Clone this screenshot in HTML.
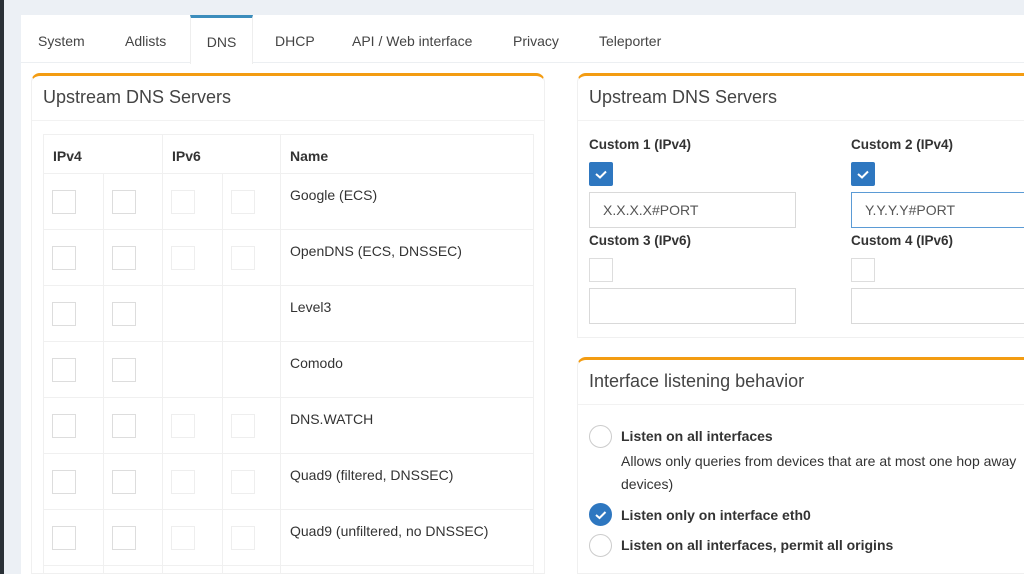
<!DOCTYPE html>
<html><head><style>
*{box-sizing:border-box;margin:0;padding:0}
html{width:1024px;height:574px;overflow:hidden}
body{width:1024px;height:574px;overflow:hidden;background:#ecf0f5;font-family:"Liberation Sans",sans-serif;color:#333;position:relative}
.strip{position:absolute;left:0;top:0;width:4px;height:574px;background:#2a3036}
.wrap{position:absolute;left:21px;top:15px;width:1003px;height:559px;background:#fff}
.tabs{position:absolute;left:0;top:0;right:0;height:48px;border-bottom:1px solid #eceff2}
.tab{position:absolute;top:0;height:48px;line-height:53px;font-size:14px;color:#444}
.tab.act{background:#fff;border-top:3px solid #3c8dbc;line-height:49px;border-left:1px solid #eee;border-right:1px solid #eee;text-align:center;height:49px}
.box{position:absolute;background:#fff;border:1px solid #f0f0f0;border-top:3px solid #f39c12;border-radius:9px 9px 0 0;overflow:hidden}
.box.r{border-right:none;border-top-right-radius:0}
.bh{height:45px;border-bottom:1px solid #f2f2f2;font-size:18px;color:#444;padding:11px 0 0 11px}
table{position:absolute;border-collapse:collapse}
td,th{border:1px solid #f0f0f0;vertical-align:top;text-align:left;font-size:14px}
th{height:39px;padding:13px 0 0 9px;font-weight:bold;color:#333}
td{height:56px}
.cb{display:inline-block;width:24px;height:24px;border:1px solid #ddd;margin:16px 0 0 8px}
.cb.l{border-color:#eee}
td.n{padding:13px 0 0 9px;color:#333}
.lbl{position:absolute;font-size:13.5px;font-weight:bold;color:#333}
.ck{position:absolute;width:24px;height:24px;background:#2e77c0;border-radius:2px}
.ek{position:absolute;width:24px;height:24px;border:1px solid #ddd}
.inp{position:absolute;width:207px;height:36px;border:1px solid #d9d9d9;font-size:14px;color:#555;padding:9px 0 0 13px}
.rad{position:absolute;width:23px;height:23px;border:1px solid #ccc;border-radius:50%}
.rt{position:absolute;font-size:14px}
</style></head><body>
<div class="strip"></div>
<div class="wrap">
 <div class="tabs">
  <div class="tab" style="left:17px">System</div>
  <div class="tab" style="left:104px">Adlists</div>
  <div class="tab act" style="left:169px;width:63px">DNS</div>
  <div class="tab" style="left:254px">DHCP</div>
  <div class="tab" style="left:331px">API / Web interface</div>
  <div class="tab" style="left:492px">Privacy</div>
  <div class="tab" style="left:578px">Teleporter</div>
 </div>
</div>
<div class="box" style="left:31px;top:73px;width:514px;height:501px">
 <div class="bh">Upstream DNS Servers</div>
 <table style="left:11px;top:58px;width:491px">
  <tr><th colspan="2" style="width:119px">IPv4</th><th colspan="2" style="width:118px">IPv6</th><th>Name</th></tr>
  <tr><td style="width:60px"><span class="cb"></span></td><td style="width:59px"><span class="cb"></span></td><td style="width:60px"><span class="cb l"></span></td><td style="width:58px"><span class="cb l"></span></td><td class="n">Google (ECS)</td></tr>
  <tr><td><span class="cb"></span></td><td><span class="cb"></span></td><td><span class="cb l"></span></td><td><span class="cb l"></span></td><td class="n">OpenDNS (ECS, DNSSEC)</td></tr>
  <tr><td><span class="cb"></span></td><td><span class="cb"></span></td><td></td><td></td><td class="n">Level3</td></tr>
  <tr><td><span class="cb"></span></td><td><span class="cb"></span></td><td></td><td></td><td class="n">Comodo</td></tr>
  <tr><td><span class="cb"></span></td><td><span class="cb"></span></td><td><span class="cb l"></span></td><td><span class="cb l"></span></td><td class="n">DNS.WATCH</td></tr>
  <tr><td><span class="cb"></span></td><td><span class="cb"></span></td><td><span class="cb l"></span></td><td><span class="cb l"></span></td><td class="n">Quad9 (filtered, DNSSEC)</td></tr>
  <tr><td><span class="cb"></span></td><td><span class="cb"></span></td><td><span class="cb l"></span></td><td><span class="cb l"></span></td><td class="n">Quad9 (unfiltered, no DNSSEC)</td></tr>
  <tr><td style="height:9px"></td><td style="height:9px"></td><td style="height:9px"></td><td style="height:9px"></td><td style="height:9px"></td></tr>
 </table>
</div>
<div class="box r" style="left:577px;top:73px;width:447px;height:265px">
 <div class="bh">Upstream DNS Servers</div>
</div>
<div class="lbl" style="left:589px;top:137px">Custom 1 (IPv4)</div>
<div class="lbl" style="left:851px;top:137px">Custom 2 (IPv4)</div>
<div class="ck" style="left:589px;top:162px"><svg width="24" height="24"><path d="M7 12l4 3.5 6-6" stroke="#fff" stroke-width="2" fill="none"/></svg></div>
<div class="ck" style="left:851px;top:162px"><svg width="24" height="24"><path d="M7 12l4 3.5 6-6" stroke="#fff" stroke-width="2" fill="none"/></svg></div>
<div class="inp" style="left:589px;top:192px">X.X.X.X#PORT</div>
<div class="inp" style="left:851px;top:192px;border-color:#5b9bd5;border-right:none;width:173px">Y.Y.Y.Y#PORT</div>
<div class="lbl" style="left:589px;top:233px">Custom 3 (IPv6)</div>
<div class="lbl" style="left:851px;top:233px">Custom 4 (IPv6)</div>
<div class="ek" style="left:589px;top:258px"></div>
<div class="ek" style="left:851px;top:258px"></div>
<div class="inp" style="left:589px;top:288px"></div>
<div class="inp" style="left:851px;top:288px;border-right:none;width:173px"></div>
<div class="box r" style="left:577px;top:357px;width:447px;height:217px">
 <div class="bh">Interface listening behavior</div>
</div>
<div class="rad" style="left:589px;top:425px"></div>
<div class="rt" style="left:621px;top:428px;font-weight:bold">Listen on all interfaces</div>
<div class="rt" style="left:621px;top:453px;white-space:nowrap;width:403px;overflow:hidden">Allows only queries from devices that are at most one hop away</div>
<div class="rt" style="left:621px;top:476px">devices)</div>
<div class="rad" style="left:589px;top:503px;background:#2e77c0;border-color:#2e77c0"><svg width="23" height="23" style="position:absolute;left:-1px;top:-1px"><path d="M7 12l3.5 3 6-6" stroke="#fff" stroke-width="2" fill="none"/></svg></div>
<div class="rt" style="left:621px;top:507px;font-weight:bold">Listen only on interface eth0</div>
<div class="rad" style="left:589px;top:534px"></div>
<div class="rt" style="left:621px;top:537px;font-weight:bold">Listen on all interfaces, permit all origins</div>
</body></html>
